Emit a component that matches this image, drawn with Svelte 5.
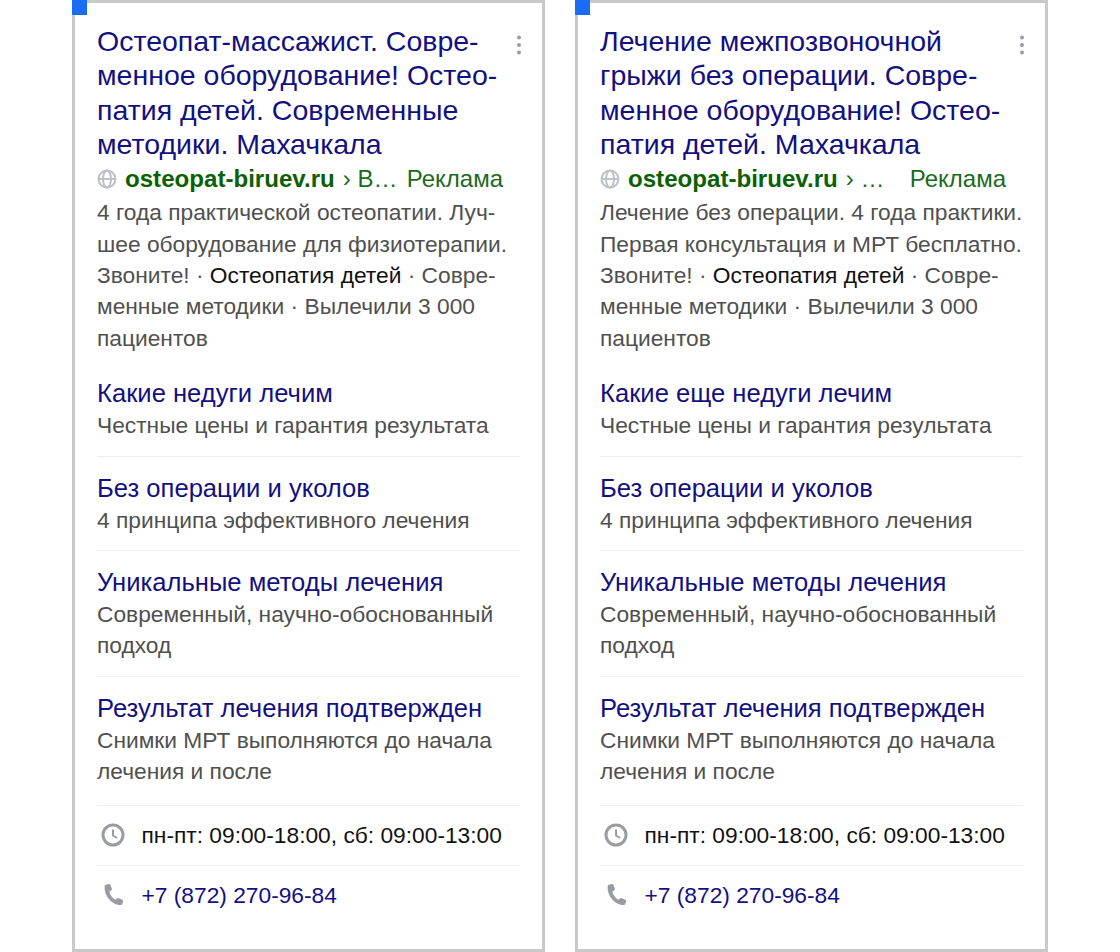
<script>
	const sitelinksA = [
		{ title: 'Какие недуги лечим', text: 'Честные цены и гарантия результата' },
		{ title: 'Без операции и уколов', text: '4 принципа эффективного лечения' },
		{ title: 'Уникальные методы лечения', text: 'Современный, научно-обоснованный подход' },
		{ title: 'Результат лечения подтвержден', text: 'Снимки МРТ выполняются до начала лечения и после' }
	];
	const sitelinksB = [{ title: 'Какие еще недуги лечим', text: sitelinksA[0].text }, ...sitelinksA.slice(1)];

	const ads = [
		{
			title: ['Остеопат-массажист. Совре-', 'менное оборудование! Остео-', 'патия детей. Современные', 'методики. Махачкала'],
			path: '› В…',
			body: ['4 года практической остеопатии. Луч-', 'шее оборудование для физиотерапии.'],
			links: sitelinksA
		},
		{
			title: ['Лечение межпозвоночной', 'грыжи без операции. Совре-', 'менное оборудование! Остео-', 'патия детей. Махачкала'],
			path: '› …',
			body: ['Лечение без операции. 4 года практики.', 'Первая консультация и МРТ бесплатно.'],
			links: sitelinksB
		}
	];
</script>

<div class="page">
	{#each ads as ad}
		<article class="card">
			<span class="corner"></span>
			<header class="head">
				<h2 class="title">
					{#each ad.title as line}<span class="line">{line}</span>{/each}
				</h2>
				<svg class="more" width="8" height="20" viewBox="0 0 8 20" fill="#9a9ca3">
					<circle cx="4" cy="2.500" r="2" /><circle cx="4" cy="10" r="2" /><circle cx="4" cy="17.500" r="2" />
				</svg>
			</header>

			<div class="site">
				<svg class="globe" width="20" height="20" viewBox="0 0 20 20" fill="none" stroke="#bfc1c8" stroke-width="2">
					<circle cx="10" cy="10" r="8.500" />
					<ellipse cx="10" cy="10" rx="4" ry="8.500" />
					<path d="M1.500 10h17" />
				</svg>
				<b class="domain">osteopat-biruev.ru</b>
				<span class="path">{ad.path}</span>
				<span class="label">Реклама</span>
			</div>

			<p class="body">
				{#each ad.body as line}<span class="line">{line}</span>{/each}
				<span class="line">Звоните! · <span class="dark">Остеопатия детей</span> · Совре-</span>
				<span class="line">менные методики · Вылечили 3 000</span>
				<span class="line">пациентов</span>
			</p>

			<ul class="links">
				{#each ad.links as link}
					<li class="link">
						<div class="link-title">{link.title}</div>
						<div class="link-text">{link.text}</div>
					</li>
				{/each}
			</ul>

			<div class="info">
				<svg width="26" height="26" viewBox="0 0 26 26" fill="none" stroke="#9a9ca3" stroke-width="3">
					<circle cx="13" cy="13" r="10" />
					<path d="M13 7.500V13.500L17 16" stroke-width="2" />
				</svg>
				<span>пн-пт: 09:00-18:00, сб: 09:00-13:00</span>
			</div>
			<div class="info phone">
				<svg width="26" height="26" viewBox="0 0 26 26" fill="#9a9ca3">
					<path d="M6.200 2.600 9.400 2c.5 0 .8.3 1 .7l1.500 4.400c.1.4 0 .8-.3 1L9.400 9.800c.7 3.300 2.900 6.300 6 8l2-1.600c.3-.2.7-.3 1-.1l4.300 2c.4.200.6.600.5 1l-.9 3c-.2.6-.7 1-1.300 1C11.800 23 3.700 13.600 4.700 4c.1-.7.800-1.300 1.500-1.400z" />
				</svg>
				<span>+7 (872) 270-96-84</span>
			</div>
		</article>
	{/each}
</div>

<style>
	:global(body) {
		margin: 0;
		background: #fff;
	}

	.page {
		display: flex;
		gap: 30px;
		height: 952px;
		padding-left: 72px;
		box-sizing: border-box;
		overflow: hidden;
		font-family: 'Liberation Sans', Arial, sans-serif;
	}

	.card {
		position: relative;
		width: 473px;
		height: 952px;
		box-sizing: border-box;
		border: 3px solid #c9c9c9;
		padding: 21px 22px 0 22px;
	}

	.corner {
		position: absolute;
		left: -3px;
		top: -3px;
		width: 15px;
		height: 15px;
		background: #1a6cf5;
	}

	.head {
		display: flex;
		justify-content: space-between;
	}

	.title {
		margin: 0;
		font-size: 28.5px;
		font-weight: 400;
		line-height: 34.3px;
		color: #13107f;
	}

	.line {
		display: block;
		white-space: nowrap;
	}

	.more {
		margin: 11px -3px 0 0;
	}

	.site {
		display: flex;
		align-items: center;
		height: 36px;
		font-size: 24px;
		white-space: nowrap;
		color: #1a6b1a;
	}

	.globe {
		margin-right: 8px;
	}

	.domain {
		font-size: 24.1px;
		color: #0b6000;
	}

	.path {
		margin-left: 8px;
	}

	.label {
		margin-left: auto;
		padding-right: 17px;
	}

	.body {
		margin: 0;
		font-size: 22.76px;
		line-height: 31.4px;
		color: #505050;
	}

	.dark {
		color: #111;
	}

	.links {
		list-style: none;
		margin: 8px 0 0;
		padding: 0;
	}

	.link {
		padding: 15px 0 14px;
		border-bottom: 1px solid #efefef;
	}

	.link:last-child {
		padding-bottom: 17px;
	}

	.link-title {
		font-size: 25.6px;
		line-height: 33px;
		color: #13107f;
	}

	.link-text {
		font-size: 22.76px;
		line-height: 31.4px;
		color: #505050;
	}

	.info {
		display: flex;
		align-items: center;
		gap: 15.500px;
		height: 59px;
		padding-left: 3px;
		border-bottom: 1px solid #efefef;
		font-size: 22.76px;
		color: #111;
	}

	.phone {
		border-bottom: 0;
		color: #13107f;
	}
</style>
